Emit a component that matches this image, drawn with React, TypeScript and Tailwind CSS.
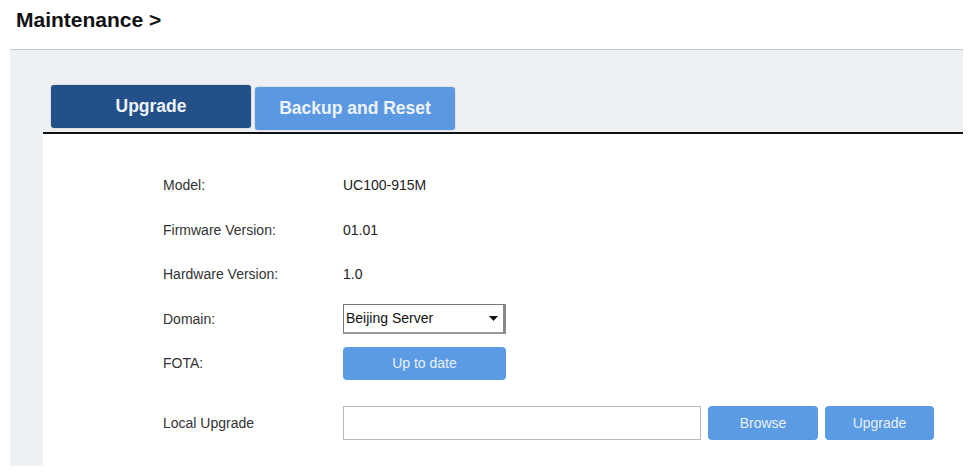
export default function App() {
    const rows = [
        { label: "Model:", value: "UC100-915M", h: "h-[45px]" },
        { label: "Firmware Version:", value: "01.01", h: "h-[44px]" },
        { label: "Hardware Version:", value: "1.0", h: "h-[45px]" },
    ];

    return (
        <div className="h-[473px] w-[970px] overflow-hidden bg-white font-['Liberation_Sans',Arial,sans-serif] text-[#333]">
            <h1 className="h-[49px] pl-[16px] pt-[4px] text-[21px] font-bold text-[#111]">Maintenance &gt;</h1>

            {/* gray panel with tabs */}
            <div className="ml-[10px] w-[953px] border-t border-[#c4c8ca] bg-[#edf1f3]">
                <div className="flex items-start gap-[4px] pl-[41px] pt-[35px]">
                    <button className="flex h-[43px] w-[200px] items-center justify-center rounded-[3px] bg-[#245089] text-[17.5px] font-bold text-[#eef3fa] shadow-[0_0_2px_rgba(0,0,0,0.25)]">
                        Upgrade
                    </button>
                    <button className="mt-[2px] flex h-[43px] w-[200px] items-center justify-center rounded-[3px] bg-[#5a98e2] text-[17.5px] font-bold text-[#eef3fa] shadow-[0_0_2px_rgba(0,0,0,0.2)]">
                        Backup and Reset
                    </button>
                </div>
                <div className="ml-[33px] mt-[2px] h-[2px] bg-[#111]" />

                <div className="flex">
                    <div className="w-[33px]" />
                    {/* white content */}
                    <div className="h-[332px] flex-1 bg-white pl-[120px] pt-[29px] text-[14px]">
                        {rows.map((r) => (
                            <div key={r.label} className={`flex items-center ${r.h}`}>
                                <span className="w-[180px]">{r.label}</span>
                                <span className="text-[#222]">{r.value}</span>
                            </div>
                        ))}
                        <div className="flex h-[44px] items-center">
                            <span className="w-[180px]">Domain:</span>
                            <div className="flex h-[30px] w-[163px] items-center justify-between border border-[#777] border-r-[3px] border-b-[2px] border-r-[#888] border-b-[#999] bg-white pl-[2px] pr-[5px] text-[#111]">
                                <span>Beijing Server</span>
                                <svg width="9" height="6" viewBox="0 0 9 6">
                                    <path d="M0 0 H9 L4.5 5 Z" fill="#111" />
                                </svg>
                            </div>
                        </div>
                        <div className="flex h-[44px] items-center">
                            <span className="w-[180px]">FOTA:</span>
                            <button className="h-[33px] w-[163px] rounded-[4px] bg-[#5b9be3] text-[14px] text-[#e8f0fb]">
                                Up to date
                            </button>
                        </div>
                        <div className="mt-[16px] flex h-[44px] items-center">
                            <span className="w-[180px]">Local Upgrade</span>
                            <div className="h-[34px] w-[358px] border border-[#b9b9b9] bg-white" />
                            <button className="ml-[7px] h-[34px] w-[110px] rounded-[4px] bg-[#5b9be3] text-[14px] text-[#e8f0fb]">
                                Browse
                            </button>
                            <button className="ml-[7px] h-[34px] w-[109px] rounded-[4px] bg-[#5b9be3] text-[14px] text-[#e8f0fb]">
                                Upgrade
                            </button>
                        </div>
                    </div>
                </div>
            </div>
        </div>
    );
}
